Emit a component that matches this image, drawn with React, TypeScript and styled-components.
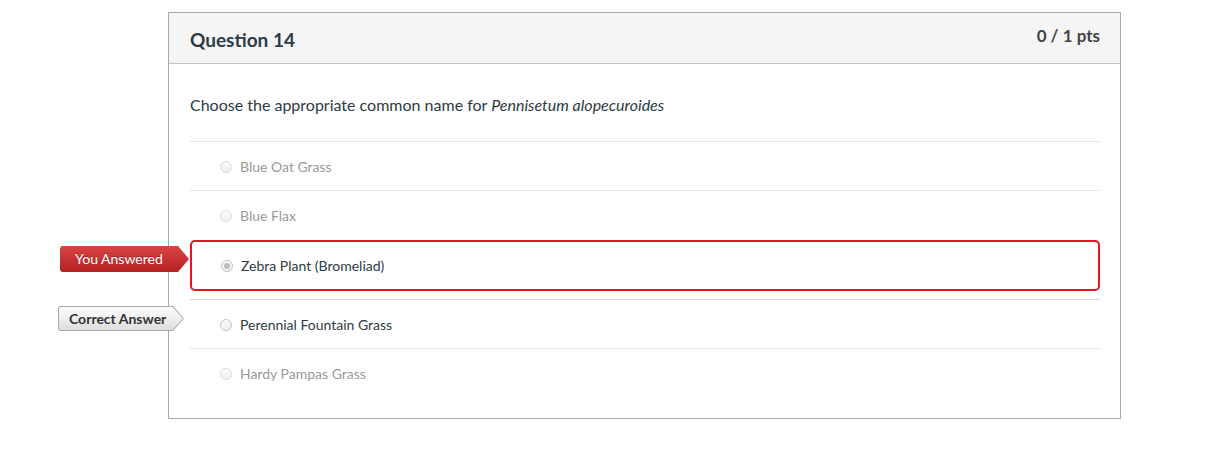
import React from "react";
import styled, { createGlobalStyle, css } from "styled-components";

const GlobalStyle = createGlobalStyle`
  html, body {
    margin: 0;
    padding: 0;
    background: #fff;
  }
  body {
    font-family: Lato, "Noto Sans", sans-serif;
    color: #2d3b45;
  }
`;

const Page = styled.div`
  padding: 12px 0 0 168px;
`;

const Card = styled.div`
  width: 951px;
  border: 1px solid #a9a9a9;
  background: #fff;
`;

const Header = styled.div`
  display: flex;
  justify-content: space-between;
  align-items: flex-start;
  height: 51px;
  padding: 0 20px 0 21px;
  background: #f5f5f5;
  border-bottom: 1px solid #c4c4c4;
  box-sizing: border-box;
`;

const Title = styled.h2`
  margin: 0;
  padding-top: 15px;
  font: 700 19px/24px Lato, sans-serif;
  color: #2d3b45;
`;

const Points = styled.div`
  padding-top: 13px;
  font: 700 17px/20px Lato, sans-serif;
  color: #444;
`;

const Body = styled.div`
  padding: 31px 20px 21px 21px;
`;

const QuestionText = styled.p`
  margin: 0 0 26px;
  font: 400 16px/20px Lato, sans-serif;
  color: #2d3b45;

  em {
    font-style: italic;
  }
`;

const Answers = styled.div`
  display: flex;
  flex-direction: column;
`;

const Row = styled.div<{ $selected?: boolean }>`
  position: relative;
  display: flex;
  align-items: center;
  height: 49px;
  box-sizing: border-box;
  padding: 2px 0 0 30px;
  border-top: 1px solid #e6e6e6;

  ${(p) =>
    p.$selected &&
    css`
      height: 51px;
      padding: 1px 0 0 29px;
      margin-top: 1px;
      border: 2px solid #ea1420;
      border-radius: 5px;
      margin-bottom: 8px;
      & + div {
        border-top-color: #d9d9d9;
      }
    `}
`;

const Radio = styled.span<{ $checked?: boolean; $muted?: boolean }>`
  width: 12px;
  height: 12px;
  box-sizing: border-box;
  border-radius: 50%;
  border: 1px solid ${(p) => (p.$muted ? "#dcdcdc" : "#c2c2c2")};
  background: linear-gradient(#fafafa, #f0f0f0);
  margin-right: 8px;
  flex-shrink: 0;
  position: relative;

  ${(p) =>
    p.$checked &&
    css`
      &::after {
        content: "";
        position: absolute;
        inset: 2px;
        border-radius: 50%;
        background: #bdbdbd;
      }
    `}
`;

const Label = styled.span<{ $muted?: boolean }>`
  font: 400 14px/18px Lato, sans-serif;
  color: ${(p) => (p.$muted ? "#9a9a9a" : "#2d3b45")};
`;

const arrowShape = "polygon(0 0, calc(100% - 11px) 0, 100% 50%, calc(100% - 11px) 100%, 0 100%)";

const Tag = styled.div<{ $tone: "red" | "gray"; $top: number; $left: number }>`
  position: absolute;
  top: ${(p) => p.$top}px;
  left: ${(p) => p.$left}px;
  height: 26px;
  display: flex;
  align-items: center;
  box-sizing: border-box;
  border-radius: 3px 0 0 3px;
  clip-path: ${arrowShape};
  font: 400 14px/1 Lato, sans-serif;
  white-space: nowrap;

  ${(p) =>
    p.$tone === "red"
      ? css`
          width: 129px;
          padding-left: 15px;
          background: linear-gradient(#d94343, #b42222);
          color: #fff;
          text-shadow: 0 -1px 0 rgba(0, 0, 0, 0.25);
        `
      : css`
          width: 126px;
          height: 25px;
          padding-left: 11px;
          background: #a8a8a8;
          color: #333;
          font-weight: 700;

          &::before {
            content: "";
            position: absolute;
            inset: 1px;
            border-radius: 2px 0 0 2px;
            background: linear-gradient(#fdfdfd, #dedede);
            clip-path: polygon(0 0, calc(100% - 10.5px) 0, 100% 50%, calc(100% - 10.5px) 100%, 0 100%);
          }

          span {
            position: relative;
          }
        `}
`;

type Answer = {
  text: string;
  muted?: boolean;
  selected?: boolean;
  correct?: boolean;
};

const answers: Answer[] = [
  { text: "Blue Oat Grass", muted: true },
  { text: "Blue Flax", muted: true },
  { text: "Zebra Plant (Bromeliad)", selected: true },
  { text: "Perennial Fountain Grass", correct: true },
  { text: "Hardy Pampas Grass", muted: true },
];

const App: React.FC = () => {
  return (
    <Page>
      <GlobalStyle />
      <Card>
        <Header>
          <Title>Question 14</Title>
          <Points>0 / 1 pts</Points>
        </Header>
        <Body>
          <QuestionText>
            Choose the appropriate common name for <em>Pennisetum alopecuroides</em>
          </QuestionText>
          <Answers>
            {answers.map((a) => (
              <Row key={a.text} $selected={a.selected}>
                {a.selected && (
                  <Tag $tone="red" $top={4} $left={-132}>
                    <span>You Answered</span>
                  </Tag>
                )}
                {a.correct && (
                  <Tag $tone="gray" $top={6} $left={-132}>
                    <span>Correct Answer</span>
                  </Tag>
                )}
                <Radio $checked={a.selected} $muted={a.muted} />
                <Label $muted={a.muted}>{a.text}</Label>
              </Row>
            ))}
          </Answers>
        </Body>
      </Card>
    </Page>
  );
};

export default App;
